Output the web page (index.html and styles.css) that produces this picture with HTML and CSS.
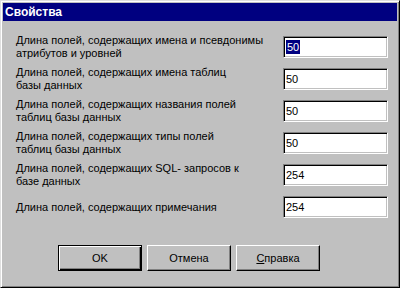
FILE: index.html
```html
<!DOCTYPE html>
<html lang="ru">
<head>
<meta charset="UTF-8">
<title>Свойства</title>
<link rel="stylesheet" href="styles.css">
</head>
<body>
<div class="window">
    <div class="title">Свойства</div>

    <div class="form">
        <div class="label">Длина полей, содержащих имена и псевдонимы<br>атрибутов и уровней</div>
        <div class="field"><span class="selected">50</span></div>

        <div class="label">Длина полей, содержащих имена таблиц<br>базы данных</div>
        <div class="field">50</div>

        <div class="label">Длина полей, содержащих названия полей<br>таблиц базы данных</div>
        <div class="field">50</div>

        <div class="label">Длина полей, содержащих типы полей<br>таблиц базы данных</div>
        <div class="field">50</div>

        <div class="label">Длина полей, содержащих SQL- запросов к<br>базе данных</div>
        <div class="field">254</div>

        <div class="label single">Длина полей, содержащих примечания</div>
        <div class="field">254</div>
    </div>

    <div class="buttons">
        <div class="btn default">OK</div>
        <div class="btn">Отмена</div>
        <div class="btn"><u>С</u>правка</div>
    </div>
</div>
</body>
</html>
```

FILE: styles.css
```css
body {
margin: 0;
font-family: "Liberation Sans", Arial, sans-serif;
font-size: 11px;
color: #000;
}

.window {
width: 400px;
height: 288px;
box-sizing: border-box;
background: #c0c0c0;
border: 1px solid;
border-color: #dfdfdf #000 #000 #dfdfdf;
box-shadow: inset 1px 1px #fff, inset -1px -1px #808080;
padding: 2px;
}

.title {
height: 18px;
line-height: 18px;
background: #000080;
color: #fff;
font-weight: bold;
font-size: 12px;
padding-left: 2px;
}

.form {
display: grid;
grid-template-columns: 1fr 105px;
grid-template-rows: repeat(6, 32px);
align-items: start;
padding: 15px 9px 0 13px;
}

.label {
line-height: 13px;
margin-top: -2px;
white-space: nowrap;
}

.label.single {
margin-top: 5px;
}

.field {
height: 22px;
box-sizing: border-box;
background: #fff;
border: 1px solid;
border-color: #808080 #fff #fff #808080;
box-shadow: inset 1px 1px #000, inset -1px -1px #c0c0c0;
padding: 0 2px;
line-height: 20px;
}

.selected {
background: #000080;
color: #fff;
padding: 1px 1px;
}

.buttons {
display: flex;
gap: 5px;
margin-top: 17px;
padding-left: 55px;
}

.btn {
width: 84px;
height: 26px;
box-sizing: border-box;
border: 1px solid;
border-color: #fff #000 #000 #fff;
box-shadow: inset -1px -1px #808080;
text-align: center;
line-height: 24px;
}

.btn.default {
border-color: #000;
box-shadow: inset 1px 1px #fff, inset -1px -1px #000, inset -2px -2px #808080;
}
```
